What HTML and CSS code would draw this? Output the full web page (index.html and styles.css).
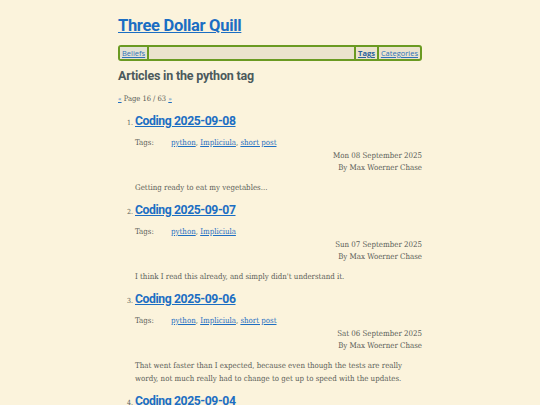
FILE: index.html
```html
<!DOCTYPE html>
<html lang="en">
<head>
<meta charset="utf-8">
<title>Articles in the python tag - Three Dollar Quill</title>
<link rel="stylesheet" href="styles.css">
</head>
<body>
<div class="page">
  <header class="site-header">
    <h1 class="site-title"><a href="#">Three Dollar Quill</a></h1>
    <nav class="nav">
      <div class="nav-left"><a class="nav-item" href="#">Beliefs</a></div>
      <div class="nav-right">
        <a class="nav-item current" href="#">Tags</a>
        <a class="nav-item" href="#">Categories</a>
      </div>
    </nav>
  </header>
  <main>
    <h2 class="page-heading">Articles in the python tag</h2>
    <p class="pager"><a class="pager-arrow" href="#">«</a> Page 16 / 63 <a class="pager-arrow" href="#">»</a></p>
    <ol class="articles" start="1">
      <li class="article">
        <h3 class="article-title"><a href="#">Coding 2025-09-08</a></h3>
        <div class="tags"><span class="tags-label">Tags:</span><span><a href="#">python</a>, <a href="#">Impliciula</a>, <a href="#">short post</a></span></div>
        <div class="meta"><div>Mon 08 September 2025</div><div>By Max Woerner Chase</div></div>
        <p class="summary">Getting ready to eat my vegetables...</p>
      </li>
      <li class="article">
        <h3 class="article-title"><a href="#">Coding 2025-09-07</a></h3>
        <div class="tags"><span class="tags-label">Tags:</span><span><a href="#">python</a>, <a href="#">Impliciula</a></span></div>
        <div class="meta"><div>Sun 07 September 2025</div><div>By Max Woerner Chase</div></div>
        <p class="summary">I think I read this already, and simply didn't understand it.</p>
      </li>
      <li class="article">
        <h3 class="article-title"><a href="#">Coding 2025-09-06</a></h3>
        <div class="tags"><span class="tags-label">Tags:</span><span><a href="#">python</a>, <a href="#">Impliciula</a>, <a href="#">short post</a></span></div>
        <div class="meta"><div>Sat 06 September 2025</div><div>By Max Woerner Chase</div></div>
        <p class="summary">That went faster than I expected, because even though the tests are really wordy, not much really had to change to get up to speed with the updates.</p>
      </li>
      <li class="article">
        <h3 class="article-title"><a href="#">Coding 2025-09-04</a></h3>
      </li>
    </ol>
  </main>
</div>
</body>
</html>
```

FILE: styles.css
```css
html, body {
  margin: 0;
  padding: 0;
  background: #fbf3dc;
}
body {
  font-family: "DejaVu Serif", serif;
  font-stretch: condensed;
  color: #5a5d58;
  font-size: 7.85px;
}
a {
  color: #1f6fc2;
}
.page {
  width: 304px;
  margin: 0 auto;
  padding-top: 16px;
}
.site-title {
  margin: 0;
  font-family: Roboto, "Open Sans", sans-serif;
  font-stretch: normal;
  font-size: 16.5px;
  line-height: 20px;
  font-weight: 700;
  letter-spacing: -0.3px;
}
.site-title a {
  color: #1b6ec3;
}
.nav {
  margin-top: 9px;
  height: 16px;
  box-sizing: border-box;
  border: 2px solid #6a9a22;
  border-radius: 3px;
  background: #ebe3cd;
  display: flex;
  justify-content: space-between;
  align-items: stretch;
  font-family: "Open Sans", sans-serif;
  font-stretch: normal;
  font-size: 7.5px;
  line-height: 12px;
}
.nav-left, .nav-right {
  display: flex;
}
.nav-item {
  padding: 0 2px;
  color: #2f72b8;
}
.nav-left .nav-item {
  border-right: 2px solid #6a9a22;
  background: #e3e2d4;
}
.nav-right .nav-item {
  border-left: 2px solid #6a9a22;
}
.nav-item.current {
  font-weight: 700;
  color: #27609c;
}
.page-heading {
  margin: 7px 0 0;
  font-family: Roboto, "Open Sans", sans-serif;
  font-stretch: normal;
  font-size: 12.5px;
  line-height: 16px;
  font-weight: 700;
  color: #4c5a5c;
  letter-spacing: -0.2px;
}
.pager {
  margin: 10px 0 0;
  line-height: 10px;
  font-size: 7.5px;
}
.pager-arrow {
  font-size: 6.5px;
}
.articles {
  margin: 9px 0 0;
  padding-left: 17px;
}
.article {
  margin-bottom: 8.5px;
}
.article::marker {
  font-size: 7px;
}
.article-title {
  margin: 0;
  font-family: Roboto, "Open Sans", sans-serif;
  font-stretch: normal;
  font-size: 12.2px;
  line-height: 16px;
  font-weight: 700;
  letter-spacing: -0.4px;
}
.article-title a {
  color: #1b6ec3;
}
.tags {
  margin-top: 9px;
  display: flex;
  line-height: 10px;
}
.tags-label {
  width: 36px;
  flex: none;
}
.meta {
  margin-top: 2px;
  text-align: right;
  line-height: 12px;
}
.summary {
  margin: 6.5px 0 0;
  line-height: 13px;
}
```
